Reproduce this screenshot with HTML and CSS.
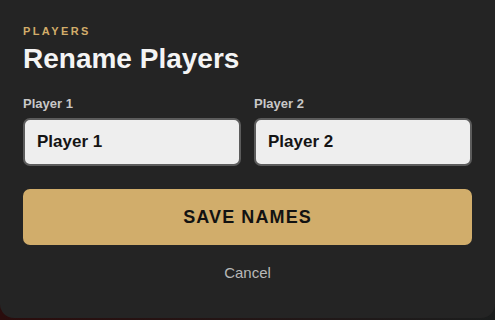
FILE: index.html
```html
<!DOCTYPE html>
<html lang="en">
<head>
    <meta charset="UTF-8">
    <meta name="viewport" content="width=device-width, initial-scale=1.0">
    <title>Rename Players</title>
    <link rel="stylesheet" href="styles.css">
</head>
<body>
    <div class="modal">
        <div class="eyebrow">Players</div>
        <h1>Rename Players</h1>

        <form action="#">
            <div class="fields">
                <div class="field">
                    <label for="p1">Player 1</label>
                    <input type="text" id="p1" value="Player 1">
                </div>
                <div class="field">
                    <label for="p2">Player 2</label>
                    <input type="text" id="p2" value="Player 2">
                </div>
            </div>
            <button type="submit" class="save">Save Names</button>
            <button type="button" class="cancel">Cancel</button>
        </form>
    </div>
</body>
</html>
```

FILE: styles.css
```css
*{
    padding: 0;
    margin: 0;
    box-sizing: border-box;
}
body{
    width: 495px;
    height: 320px;
    background: linear-gradient(90deg, #2a0d0d, #1b1d1d);
    font-family: "Liberation Sans", Arial, sans-serif;
    overflow: hidden;
}
.modal{
    height: 318px;
    padding: 24px 23px 0;
    background-color: #242424;
    border-radius: 0 0 14px 14px;
}
.eyebrow{
    font-size: 11px;
    line-height: 14px;
    font-weight: 700;
    letter-spacing: 2.4px;
    text-transform: uppercase;
    color: #d2ad6a;
}
h1{
    margin-top: 5px;
    font-size: 28px;
    line-height: 32px;
    font-weight: 700;
    color: #f4f4f4;
}
form{
    margin-top: 21px;
    display: flex;
    flex-direction: column;
}
.fields{
    display: flex;
    gap: 13px;
}
.field{
    flex: 1;
    min-width: 0;
    display: flex;
    flex-direction: column;
    gap: 6px;
    label{
        font-size: 13px;
        line-height: 16px;
        font-weight: 700;
        color: #c8c8c8;
    }
    input{
        width: 100%;
        height: 48px;
        padding: 0 12px;
        border: solid 2px #5c5c5c;
        border-radius: 7px;
        background-color: #eeeeee;
        font-family: inherit;
        font-size: 17px;
        font-weight: 700;
        color: #141414;
        outline: none;
    }
}
.save{
    margin-top: 23px;
    height: 56px;
    border: none;
    border-radius: 7px;
    background-color: #d1ad6b;
    font-family: inherit;
    font-size: 18px;
    font-weight: 700;
    letter-spacing: 1.1px;
    text-transform: uppercase;
    color: #121212;
}
.cancel{
    margin-top: 19px;
    align-self: center;
    border: none;
    background: none;
    font-family: inherit;
    font-size: 15px;
    line-height: 18px;
    color: #b8b8b8;
}
```
